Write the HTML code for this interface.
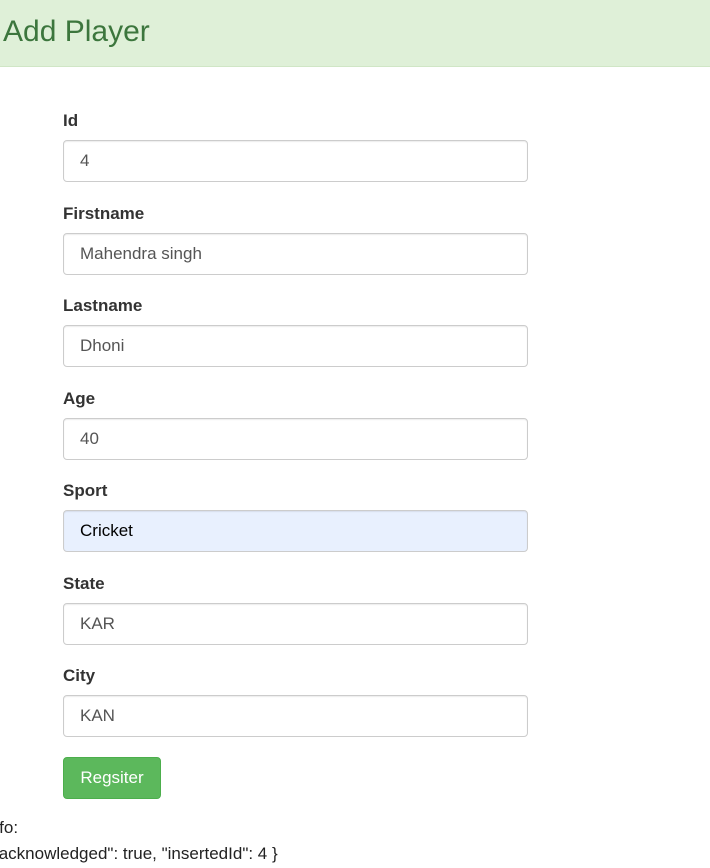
<!DOCTYPE html>
<html><head><style>
body{margin:0;font-family:"Liberation Sans",sans-serif;color:#333;background:#fff;width:710px;height:868px;overflow:hidden;position:relative}
.hd{position:absolute;left:0;top:0;width:710px;height:67px;background:#dff0d8;border-bottom:1px solid #d0e6c6;box-sizing:border-box}
.hd span{position:absolute;left:3px;top:15px;font-size:30px;color:#3c763d}
.f{position:absolute;left:63px;width:465px}
.f label{display:block;font-weight:bold;font-size:17px;height:19px;line-height:19px}
.f .i{margin-top:10px;height:42px;box-sizing:border-box;border:1px solid #ccc;border-radius:4px;box-shadow:inset 0 1px 1px rgba(0,0,0,.075);padding:0 16px;line-height:40px;font-size:17px;color:#555}
.btn{position:absolute;left:63px;top:757px;width:98px;height:42px;background:#5cb85c;border:1px solid #4cae4c;border-radius:4px;box-sizing:border-box;color:#fff;font-size:17px;text-align:center;line-height:40px}
.t{position:absolute;font-size:17px;color:#222;white-space:nowrap}
</style></head><body>
<div class="hd"><span>Add Player</span></div>
<div class="f" style="top:111px"><label>Id</label><div class="i">4</div></div>
<div class="f" style="top:204px"><label>Firstname</label><div class="i">Mahendra singh</div></div>
<div class="f" style="top:296px"><label>Lastname</label><div class="i">Dhoni</div></div>
<div class="f" style="top:389px"><label>Age</label><div class="i">40</div></div>
<div class="f" style="top:481px"><label>Sport</label><div class="i" style="background:#e8f0fe;color:#000">Cricket</div></div>
<div class="f" style="top:574px"><label>State</label><div class="i">KAR</div></div>
<div class="f" style="top:666px"><label>City</label><div class="i">KAN</div></div>
<div class="btn">Regsiter</div>
<div class="t" style="left:-15px;top:818px">Info:</div>
<div class="t" style="left:-13px;top:844px">{"acknowledged": true, "insertedId": 4 }</div>
</body></html>
